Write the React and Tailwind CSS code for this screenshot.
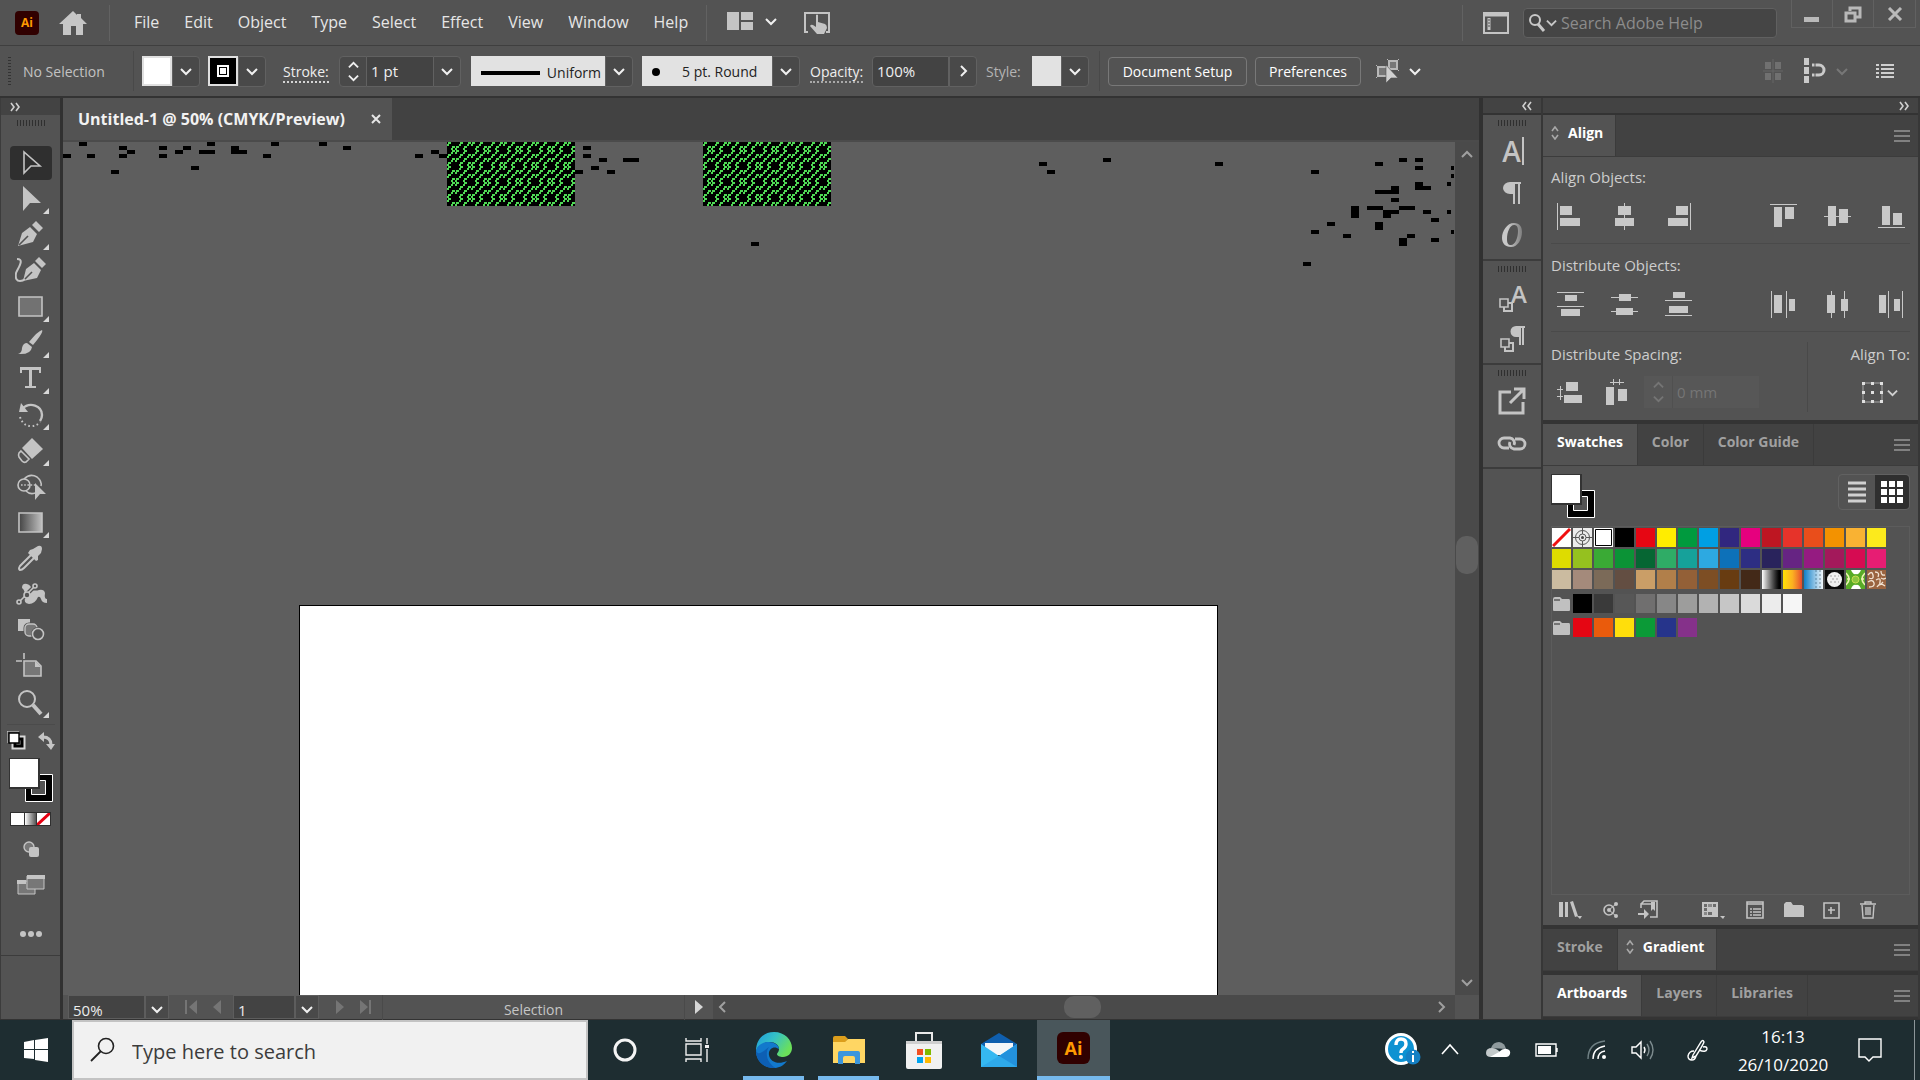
import { useState } from "react";
import { clsx } from "clsx";

// ── Icon base ─────────────────────────────────────────────────────────────────
const Svg = ({ w = 24, h = 24, className, children }) => (
  <svg width={w} height={h} viewBox={`0 0 ${w} ${h}`} className={clsx("shrink-0", className)} fill="none" aria-hidden="true">
    {children}
  </svg>
);

const Chevron = ({ dir = "down", size = 12, stroke = "#f0f0f0", width = 2 }) => {
  const d = {
    down: "M1 4l5 5 5-5",
    up: "M1 8l5-5 5 5",
    left: "M8 1L3 6l5 5",
    right: "M4 1l5 5-5 5",
  }[dir];
  return (
    <svg width={size} height={size} viewBox="0 0 12 12" fill="none" className="shrink-0" aria-hidden="true">
      <path d={d} stroke={stroke} strokeWidth={width} />
    </svg>
  );
};

const DoubleChevron = ({ dir }) => (
  <Svg w={12} h={10}>
    <path
      d={dir === "left" ? "M5 1L2 5l3 4M10 1L7 5l3 4" : "M2 1l3 4-3 4M7 1l3 4-3 4"}
      stroke="#d0d0d0"
      strokeWidth="1.6"
    />
  </Svg>
);

const Grip = () => (
  <Svg w={28} h={6}>
    {[0, 3, 6, 9, 12, 15, 18, 21, 24, 27].map((x) => (
      <rect key={x} x={x} width="1" height="6" fill="#2f2f2f" />
    ))}
  </Svg>
);

// ── Title bar ─────────────────────────────────────────────────────────────────
const MENUS = ["File", "Edit", "Object", "Type", "Select", "Effect", "View", "Window", "Help"];

const TitleBar = () => (
  <header className="flex h-[46px] shrink-0 items-center border-b border-[#3f3f3f] bg-[#535353]">
    <div className="ml-[15px] flex h-6 w-6 items-center justify-center rounded bg-[#300000] text-xs font-bold text-[#ff9a00]">
      Ai
    </div>
    <button aria-label="Home" className="ml-5">
      <Svg w={28} h={24}>
        <path d="M14 0L0 13h4v11h8v-9h5v9h7V13h4L22 7V3h-4v1z" fill="#c6c6c6" />
      </Svg>
    </button>
    <div className="ml-[22px] h-9 w-px bg-[#626262]" />
    <nav className="ml-6 flex gap-[25px] pb-[2px] text-base text-[#e6e6e6]">
      {MENUS.map((m) => (
        <button key={m}>{m}</button>
      ))}
    </nav>
    <div className="ml-[18px] h-9 w-px bg-[#626262]" />
    <button aria-label="Arrange documents" className="ml-5 flex items-center gap-3 pb-1">
      <Svg w={26} h={18}>
        <path d="M0 0h12v18H0zM14 0h12v8H14zM14 10h12v8H14z" fill="#c4c4c4" />
      </Svg>
      <Chevron />
    </button>
    <button aria-label="Touch workspace" className="ml-[26px]">
      <Svg w={28} h={24}>
        <path d="M5 21H2V2h24v19h-3" stroke="#c4c4c4" strokeWidth="2" />
        <path d="M13 4q1-1 2 0v7l7 2q2 1 2 4l-3 6h-7l-7-8q1-2 3-1l3 2z" fill="#c4c4c4" />
      </Svg>
    </button>
    <div className="ml-auto h-9 w-px bg-[#626262]" />
    <button aria-label="Switch workspace" className="ml-5">
      <Svg w={26} h={22}>
        <path d="M1 1h24v20H1z" stroke="#c4c4c4" strokeWidth="2" />
        <path d="M1 3h24M6 6v12" stroke="#c4c4c4" strokeWidth="3" />
        <path d="M5 8h2M5 11h2M5 14h2" stroke="#535353" />
      </Svg>
    </button>
    <label className="ml-[14px] flex h-[30px] w-[254px] items-center rounded border border-[#606060] bg-[#454545] pl-1">
      <Svg w={18} h={20}>
        <circle cx="7" cy="7" r="5" stroke="#c8c8c8" strokeWidth="2" />
        <path d="M10 11l6 7" stroke="#c8c8c8" strokeWidth="3" />
      </Svg>
      <Chevron stroke="#c8c8c8" size={11} />
      <input
        aria-label="Search Adobe Help"
        placeholder="Search Adobe Help"
        className="ml-1 w-0 flex-1 bg-transparent text-base outline-none placeholder:text-[#8c8c8c]"
      />
    </label>
    <div className="mr-1 ml-[14px] flex h-7 self-start border border-t-0 border-[#616161]">
      <button aria-label="Minimize" className="flex w-[41px] items-center justify-center border-r border-[#616161]">
        <Svg w={16} h={16}>
          <path d="M0 11h15v5H0z" fill="#b9b9b9" />
        </Svg>
      </button>
      <button aria-label="Restore" className="flex w-[41px] items-center justify-center border-r border-[#616161]">
        <Svg w={18} h={18}>
          <path d="M6 6V3h10v9h-4M2 8h9v8H2z" stroke="#b9b9b9" strokeWidth="3" />
        </Svg>
      </button>
      <button aria-label="Close" className="flex w-[41px] items-center justify-center">
        <Svg w={16} h={14}>
          <path d="M2 1l12 12M14 1L2 13" stroke="#b9b9b9" strokeWidth="3" />
        </Svg>
      </button>
    </div>
  </header>
);

// ── Control bar ───────────────────────────────────────────────────────────────
const DropButton = ({ label, dir }) => (
  <button
    aria-label={label}
    className="flex h-[31px] w-7 items-center justify-center rounded-r border border-[#616161] bg-[#494949]"
  >
    <Chevron dir={dir} />
  </button>
);

const ControlBar = () => (
  <section
    aria-label="Control"
    className="flex h-[52px] shrink-0 items-center border-b-2 border-[#333] bg-[#535353] text-sm whitespace-nowrap text-[#efefef]"
  >
    <Svg w={3} h={28} className="ml-2">
      {[0, 3, 6, 9, 12, 15, 18, 21, 24, 27].map((y) => (
        <rect key={y} y={y} width="3" height="1" fill="#333" />
      ))}
    </Svg>
    <span className="ml-3 w-[110px] pt-[2px] text-[#c2c2c2]">No Selection</span>
    <div className="h-10 w-px bg-[#494949]" />
    <button aria-label="Fill" className="ml-2 h-[30px] w-[30px] border-2 border-[#e0e0e0] bg-white" />
    <DropButton label="Fill swatches" />
    <button
      aria-label="Stroke"
      className="ml-2 flex h-[30px] w-[30px] items-center justify-center border-2 border-[#e0e0e0] bg-black"
    >
      <span className="block h-3 w-3 border-2 border-white bg-white outline-1 -outline-offset-3 outline-black" />
    </button>
    <DropButton label="Stroke swatches" />
    <label htmlFor="stroke-weight" className="ml-[17px] w-[56px] pt-[2px]">
      <span className="border-b-2 border-dotted border-[#d4d4d4]">Stroke:</span>
    </label>
    <div className="flex h-[31px] w-7 flex-col items-center justify-between rounded-l border border-[#616161] bg-[#494949] py-[3px]">
      <button aria-label="Increase">
        <Chevron dir="up" size={11} />
      </button>
      <button aria-label="Decrease">
        <Chevron size={11} />
      </button>
    </div>
    <input
      id="stroke-weight"
      defaultValue="1 pt"
      className="h-[31px] w-[66px] border-y border-[#616161] bg-[#434343] pl-1 text-[15px] outline-none"
    />
    <DropButton label="Stroke weights" />
    <button className="ml-[10px] flex h-[30px] w-[134px] items-center justify-between bg-[#e2e2e2] pt-1 pr-1 pl-[10px] text-[#222]">
      <span className="h-1 w-[59px] bg-black" />
      Uniform
    </button>
    <DropButton label="Width profiles" />
    <button className="ml-[9px] flex h-[30px] w-[130px] items-center gap-[22px] bg-[#e2e2e2] pt-[2px] pl-[10px] text-[#222]">
      <span className="h-2 w-2 rounded-full bg-black" />
      5 pt. Round
    </button>
    <DropButton label="Brushes" />
    <label htmlFor="opacity" className="ml-[10px] w-[62px] pt-[2px]">
      <span className="border-b-2 border-dotted border-[#a9a9a9]">Opacity:</span>
    </label>
    <input
      id="opacity"
      defaultValue="100%"
      className="h-[31px] w-[77px] rounded-l border border-[#616161] bg-[#434343] pl-1 text-[15px] outline-none"
    />
    <DropButton label="Opacity slider" dir="right" />
    <span className="ml-[9px] w-[46px] pt-[2px] text-[#b4b4b4]">Style:</span>
    <button aria-label="Graphic style" className="h-[30px] w-[29px] bg-[#e2e2e2]" />
    <DropButton label="Graphic styles" />
    <div className="ml-[10px] h-10 w-px bg-[#494949]" />
    <button className="ml-2 h-[29px] w-[139px] rounded border border-[#787878] pt-px text-white">Document Setup</button>
    <button className="ml-2 h-[29px] w-[106px] rounded border border-[#787878] pt-px text-white">Preferences</button>
    <button aria-label="Select similar" className="ml-[14px] flex items-center gap-2">
      <Svg w={26} h={26}>
        <path d="M3 9h9v9H3zM14 3h8v8h-8z" fill="#777" stroke="#b8b8b8" strokeWidth="2" />
        <path d="M1 7l3 3M1 20l3-3M12 1l3 3M24 1l-3 3M24 13l-3-3" stroke="#b8b8b8" />
        <path d="M11 7v18l5-5h7z" fill="#d0d0d0" stroke="#535353" strokeWidth="0.6" />
      </Svg>
      <Chevron />
    </button>
    <div className="mr-[26px] ml-auto flex items-center">
      <Svg w={20} h={24}>
        <path d="M2 3h6v7H2zM12 3h6v7h-6zM2 14h6v7H2zM12 14h6v7h-6z" fill="#707070" />
        <path d="M10 0v24M0 12h20" stroke="#666" />
      </Svg>
      <button aria-label="Snap options" className="ml-5 flex items-center gap-[10px]">
        <Svg w={23} h={26}>
          <path d="M1 0h5v7H1zM1 9h5v7H1zM1 18h5v7H1z" fill="#cacaca" />
          <path d="M9 7h7a4 4 0 010 10H9" stroke="#cacaca" strokeWidth="3" />
          <path d="M12 5v4M12 15v4" stroke="#535353" />
        </Svg>
        <Chevron stroke="#777" />
      </button>
      <button aria-label="Control menu" className="ml-7">
        <Svg w={18} h={16}>
          <path d="M0 2h3M0 6h3M0 10h3M0 14h3M5 2h13M5 6h13M5 10h13M5 14h13" stroke="#cfcfcf" strokeWidth="2" />
        </Svg>
      </button>
    </div>
  </section>
);

// ── Tools ─────────────────────────────────────────────────────────────────────
const C = "#c4c4c4";

const TOOLS = [
  { name: "Selection", art: <path d="M6 2v21l7-7h9z" stroke={C} strokeWidth="1.6" /> },
  { name: "Direct Selection", more: true, art: <path d="M5 0v25l7-8h11z" fill={C} /> },
  {
    name: "Pen",
    more: true,
    art: (
      <>
        <path d="M0 24l4-13 8-6 7 7-4 8zM14 3l4-4 7 7-4 4z" fill={C} />
        <path d="M1 23l9-9" stroke="#535353" strokeWidth="1.6" />
      </>
    ),
  },
  {
    name: "Curvature",
    art: (
      <>
        <path d="M5 23l3-12 8-6 7 7-4 8zM17 3l4-4 7 7-4 4z" fill={C} />
        <path d="M6 22l8-8" stroke="#535353" strokeWidth="1.6" />
        <path d="M-1 1c8 0 1 9-1 14-1 6 1 8 4 8q3 0 5-2" stroke={C} strokeWidth="2" />
      </>
    ),
  },
  { name: "Rectangle", more: true, art: <path d="M1 3h23v19H1z" fill="#727272" stroke={C} strokeWidth="1.6" /> },
  {
    name: "Paintbrush",
    more: true,
    art: <path d="M24 0Q26 2 15 15l-4-3Q20 1 24 0zM9 13l5 4q-1 8-14 7 4-1 4-6 1-5 5-5z" fill={C} />,
  },
  { name: "Type", more: true, art: <path d="M2 1h21v6h-2V4h-7v16h4v2H7v-2h4V4H4v3H2z" fill={C} /> },
  {
    name: "Rotate",
    more: true,
    art: (
      <>
        <path d="M4 7C12-1 24 4 24 13q0 3-2 6" stroke={C} strokeWidth="2.4" />
        <path d="M3 1l-2 9h9z" fill={C} />
        <path d="M2 15q3 9 11 9 6 0 9-4" stroke={C} strokeWidth="2" strokeDasharray="1.6 2.6" />
      </>
    ),
  },
  {
    name: "Eraser",
    more: true,
    art: (
      <>
        <path d="M14 0l11 11-11 10L4 10z" fill={C} />
        <path d="M3 13l8 8-3 3q-2 1-4-1l-3-4q-1-2 0-4z" stroke={C} strokeWidth="1.6" />
      </>
    ),
  },
  {
    name: "Shape Builder",
    art: (
      <>
        <circle cx="6" cy="11" r="6" stroke={C} strokeWidth="1.6" />
        <path d="M6 5q6-6 13-2 5 4 4 9M8 17q4 4 9 2" stroke={C} strokeWidth="1.6" />
        <path d="M3 11h14" stroke={C} strokeWidth="1.6" strokeDasharray="1.6 1.6" />
        <path d="M17 9v17l5-6h6z" fill={C} />
      </>
    ),
  },
  {
    name: "Gradient",
    more: true,
    art: <path d="M1 3h23v19H1z" fill="url(#toolGradient)" stroke={C} strokeWidth="1.6" />,
  },
  {
    name: "Eyedropper",
    art: (
      <>
        <path d="M14 8L2 20q-2 3 0 4 2 0 4-2l12-12" stroke={C} strokeWidth="2" />
        <path d="M12 4l3-1 5-3q4-1 4 3l-1 4-3 3v4l-2 1-8-8z" fill={C} />
      </>
    ),
  },
  {
    name: "Puppet Warp",
    art: (
      <>
        <path d="M4 6q0-5 5-4 4 1 5 6 4 1 7 0 5-1 6 3-1 6 2 6v4q-5 0-6-4-1-3-3-2-3 7-9 7-6-1-4-8 0-6-3-8z" fill={C} />
        <path d="M1 20L16 5" stroke="#535353" strokeWidth="4" />
        <path d="M1 20L16 5" stroke={C} strokeWidth="1.6" />
        <circle cx="9" cy="13" r="3" fill="#535353" stroke={C} strokeWidth="1.6" />
        <circle cx="17" cy="4" r="2" fill="#535353" stroke={C} strokeWidth="1.6" />
        <circle cx="1" cy="20" r="2" fill="#535353" stroke={C} strokeWidth="1.6" />
      </>
    ),
  },
  {
    name: "Blend",
    art: (
      <>
        <path d="M0 1h12v12H0z" fill={C} />
        <rect x="7" y="6" width="12" height="12" rx="4" fill="#777" stroke="#535353" strokeWidth="3" />
        <rect x="7" y="6" width="12" height="12" rx="4" fill="#777" stroke={C} strokeWidth="1.4" />
        <circle cx="20" cy="16" r="7" fill="#535353" />
        <circle cx="20" cy="16" r="5.5" stroke={C} strokeWidth="1.6" />
      </>
    ),
  },
  {
    name: "Artboard",
    art: (
      <>
        <path d="M6 7h12l5 5v10H6z" fill="#777" stroke={C} strokeWidth="1.6" />
        <path d="M17 7v6h6z" fill={C} />
        <path d="M6-1v6M-2 7h6" stroke={C} strokeWidth="1.6" />
      </>
    ),
  },
  {
    name: "Zoom",
    more: true,
    art: (
      <>
        <circle cx="9" cy="9" r="8" stroke={C} strokeWidth="2" />
        <path d="M15 15l8 9" stroke={C} strokeWidth="4" />
      </>
    ),
  },
];

const FillStroke = ({ className }) => (
  <Svg w={44} h={44} className={className}>
    <path d="M16.5 16.5h27v27h-27z" fill="#000" stroke="#fff" />
    <path d="M22.5 22.5h14v14h-14z" fill="#535353" stroke="#fff" />
    <path d="M0 0h30v30H0z" fill="#fff" stroke="#333" strokeWidth="2" />
  </Svg>
);

const Toolbar = () => {
  const [active, setActive] = useState("Selection");

  return (
    <aside className="flex w-[63px] shrink-0 flex-col border-r-3 border-l border-r-[#313131] border-l-[#3c3c3c] bg-[#535353]">
      <div className="flex h-[17px] items-center bg-[#434343] pl-2">
        <DoubleChevron dir="right" />
      </div>
      <div className="flex flex-col items-center border-b border-[#3c3c3c] pt-[5px] pb-[18px]">
        <Grip />
        <svg width="0" height="0" className="h-0" aria-hidden="true">
          <defs>
            <linearGradient id="toolGradient">
              <stop offset="0" stopColor="#444" />
              <stop offset="1" stopColor="#c0c0c0" />
            </linearGradient>
          </defs>
        </svg>
        <div className="mt-5 flex flex-col gap-[2px]">
          {TOOLS.map((tool) => (
            <button
              key={tool.name}
              aria-label={tool.name}
              onClick={() => setActive(tool.name)}
              className={clsx(
                "flex h-[34px] w-[42px] items-center justify-center rounded",
                active === tool.name && "bg-[#2f2f2f]"
              )}
            >
              <Svg w={34} h={30} className="ml-[2px]">
                <g transform="translate(3 2)">{tool.art}</g>
                {tool.more && <path d="M34 24v6h-6z" fill="#d8d8d8" />}
              </Svg>
            </button>
          ))}
        </div>
        <div className="mt-1 h-px w-12 bg-[#4b4b4b]" />
        <div className="mt-[6px] flex w-12 items-center justify-between">
          <button aria-label="Default fill and stroke">
            <Svg w={19} h={19}>
              <path d="M7 7h9v9H7z" stroke="#d8d8d8" strokeWidth="5" />
              <path d="M8 8h7v7H8z" stroke="#000" strokeWidth="3" />
              <path d="M2 2h10v10H2z" fill="#fff" stroke="#000" strokeWidth="1.4" />
              <path d="M0 12V0h12" stroke="#d8d8d8" />
            </Svg>
          </button>
          <button aria-label="Swap fill and stroke">
            <Svg w={17} h={18}>
              <path d="M5 5q8 0 8 8" stroke={C} strokeWidth="3" />
              <path d="M0 5l6-5v10zM8 12h9l-4 6z" fill={C} />
            </Svg>
          </button>
        </div>
        <FillStroke className="mt-2" />
        <div className="mt-[10px] flex border border-[#2f2f2f]">
          <button aria-label="Color" className="h-3 w-[13px] bg-white" />
          <button aria-label="Gradient" className="h-3 w-[13px] border-x border-[#333] bg-linear-to-r from-white to-[#555]" />
          <button aria-label="None" className="bg-white">
            <Svg w={13} h={12}>
              <path d="M0 12L13 0" stroke="#e60012" strokeWidth="3" />
            </Svg>
          </button>
        </div>
        <button aria-label="Draw mode" className="mt-[15px]">
          <Svg w={18} h={16}>
            <circle cx="7" cy="6" r="5" fill="#777" stroke={C} strokeWidth="1.4" />
            <rect x="7" y="6" width="10" height="10" rx="2" fill={C} />
          </Svg>
        </button>
        <button aria-label="Screen mode" className="mt-[18px]">
          <Svg w={28} h={20}>
            <path d="M1 6h17v13H1z" fill="#777" stroke={C} />
            <path d="M0 5h9v4H0z" fill={C} />
            <path d="M10 1h17v13H10z" fill="#777" stroke={C} />
            <path d="M10 0h18v4H10z" fill={C} />
          </Svg>
        </button>
        <button aria-label="Edit toolbar" className="mt-9">
          <Svg w={22} h={6}>
            <circle cx="3" cy="3" r="3" fill={C} />
            <circle cx="11" cy="3" r="3" fill={C} />
            <circle cx="19" cy="3" r="3" fill={C} />
          </Svg>
        </button>
      </div>
    </aside>
  );
};

// ── Document ──────────────────────────────────────────────────────────────────
// [x, y, width, height] of each stray block, from the canvas' top left corner
const BLOCKS = [
  [16, 0], [56, 4], [64, 8], [56, 12], [0, 12], [24, 12], [48, 28], [96, 4], [96, 12], [120, 4], [112, 8],
  [144, 0], [136, 8, 16], [168, 4], [168, 8, 16], [128, 24], [200, 12], [208, 0], [256, 0], [280, 4],
  [352, 12], [368, 8], [376, 12], [520, 4], [520, 12], [536, 16], [528, 24], [512, 28], [544, 28],
  [560, 16, 16], [688, 100], [976, 20], [984, 28], [1040, 16], [1152, 20],
  [1248, 28], [1312, 20], [1336, 16], [1352, 16], [1352, 24], [1388, 24, 3], [1388, 32, 3], [1384, 40, 4],
  [1352, 40, 8, 8], [1360, 44], [1328, 44, 8, 8], [1312, 48, 16], [1328, 56], [1288, 64, 8, 12],
  [1304, 64, 16], [1336, 64, 16], [1320, 68, 8, 8], [1328, 68], [1360, 68], [1384, 68, 4], [1368, 76],
  [1264, 80], [1248, 88], [1312, 80, 8, 8], [1280, 92], [1344, 92], [1336, 96, 8, 8], [1368, 96],
  [1388, 88, 3], [1240, 120],
];

// horizontal shift of the wave in each 4px row of the 32px tile
const WAVE_ROWS = [16, 0, 0, 16, 0, 16, 16, 0];
// x, y, width of the dots that make one wave and two ticks
const WAVE_DOTS = [[4, 2, 2], [5, 0, 3], [8, 2, 2], [9, 0, 3], [16, 2, 2], [17, 0, 3], [28, 2, 2], [29, 0, 3]];

const Canvas = () => (
  <div className="relative min-h-0 flex-1 overflow-hidden bg-[#5e5e5e]">
    <svg className="absolute inset-0 h-full w-full" shapeRendering="crispEdges" aria-hidden="true">
      <defs>
        <pattern id="waves" width="32" height="32" patternUnits="userSpaceOnUse">
          <rect width="32" height="32" fill="#000" />
          {WAVE_ROWS.map((shift, row) =>
            WAVE_DOTS.map(([x, y, w]) => (
              <rect key={`${row}-${x}`} x={(x + shift) % 32} y={row * 4 + y} width={w} height="2" fill="#4fd955" />
            ))
          )}
        </pattern>
      </defs>
      {BLOCKS.map(([x, y, w = 8, h = 4]) => (
        <rect key={`${x}-${y}`} x={x} y={y} width={w} height={h} fill="#000" />
      ))}
      <rect x="384" width="128" height="64" fill="url(#waves)" />
      <rect x="640" width="128" height="64" fill="url(#waves)" />
    </svg>
    <div className="absolute top-[463px] -bottom-px left-[236px] w-[919px] border border-black bg-white" />
  </div>
);

const StatusBar = () => (
  <div className="flex h-6 shrink-0 bg-[#4a4a4a] text-sm leading-6 text-[#ececec]">
    <div className="flex w-[650px] shrink-0 items-center bg-[#535353] pl-[5px]">
      <input aria-label="Zoom level" defaultValue="50%" className="h-full w-[77px] border border-[#5d5d5d] bg-[#434343] pt-[6px] pl-1 text-[15px] outline-none" />
      <button aria-label="Zoom presets" className="flex h-full w-6 items-center justify-center border border-[#5d5d5d] bg-[#494949] pt-1">
        <Chevron />
      </button>
      <Svg w={42} h={16} className="ml-4">
        <path d="M1 1v14" stroke="#757575" strokeWidth="2" />
        <path d="M12 1v14L4 8zM36 1v14l-8-7z" fill="#757575" />
      </Svg>
      <input aria-label="Artboard number" defaultValue="1" className="ml-[6px] h-full w-[62px] border border-[#5d5d5d] bg-[#434343] pt-[6px] pl-1 text-[15px] outline-none" />
      <button aria-label="Artboard list" className="flex h-full w-6 items-center justify-center border border-[#5d5d5d] bg-[#494949] pt-1">
        <Chevron />
      </button>
      <Svg w={38} h={16} className="ml-[17px]">
        <path d="M0 1v14l8-7zM24 1v14l8-7z" fill="#757575" />
        <path d="M34 1v14" stroke="#757575" strokeWidth="2" />
      </Svg>
      <span className="ml-2 flex-1 border-x border-[#4a4a4a] pt-[6px] text-center text-[#c6c6c6]">Selection</span>
      <button aria-label="Status menu" className="flex w-7 justify-center">
        <Svg w={8} h={16}>
          <path d="M0 1v14l8-7z" fill="#d6d6d6" />
        </Svg>
      </button>
    </div>
    <div className="flex flex-1 items-center pr-2 pl-1">
      <Chevron dir="left" stroke="#a0a0a0" />
      <div className="flex flex-1 justify-center">
        <div className="h-[22px] w-[37px] rounded-[10px] bg-[#606060]" />
      </div>
      <Chevron dir="right" stroke="#a0a0a0" />
    </div>
    <div className="w-6 bg-[#535353]" />
  </div>
);

const DocumentArea = () => (
  <main className="flex min-w-0 flex-1 flex-col border-r-4 border-[#313131]">
    <div className="flex h-11 shrink-0 border-b-2 border-[#4b4b4b] bg-[#424242]">
      <div className="flex w-[329px] items-center justify-between bg-[#535353] pr-[10px] pl-[15px] text-base font-bold text-[#f2f2f2]">
        Untitled-1 @ 50% (CMYK/Preview)
        <button aria-label="Close document">
          <Svg w={12} h={12}>
            <path d="M2 2l8 8M10 2l-8 8" stroke="#e6e6e6" strokeWidth="2" />
          </Svg>
        </button>
      </div>
    </div>
    <div className="flex min-h-0 flex-1">
      <Canvas />
      <div className="flex w-6 flex-col items-center justify-between bg-[#4a4a4a] py-[7px]">
        <Chevron dir="up" stroke="#a0a0a0" />
        <div className="mb-7 h-[38px] w-[22px] rounded-[10px] bg-[#606060]" />
        <Chevron stroke="#a0a0a0" />
      </div>
    </div>
    <StatusBar />
  </main>
);

// ── Collapsed panel dock ──────────────────────────────────────────────────────
const DOCK_GROUPS = [
  [
    {
      name: "Character",
      icon: (
        <span className="flex items-center gap-px pl-[2px] text-[28px] leading-7 font-semibold">
          A<span className="h-7 w-[2px] bg-[#c4c4c4]" />
        </span>
      ),
    },
    {
      name: "Paragraph",
      icon: (
        <Svg w={20} h={24}>
          <path d="M19 1H8a7 6 0 000 12h3v10h2V3h3v20h2V3h1z" fill={C} />
        </Svg>
      ),
    },
    {
      name: "OpenType",
      icon: (
        <Svg w={22} h={26}>
          <defs>
            <linearGradient id="openTypeRing">
              <stop offset="0.3" stopColor="#c8c8c8" />
              <stop offset="1" stopColor="#808080" />
            </linearGradient>
          </defs>
          <path
            d="M13 1c6 0 8 4 8 9 0 7-4 15-11 15-6 0-9-4-9-9C1 9 6 1 13 1zm0 2c-4 0-7 7-7 14 0 4 1 6 4 6 4 0 7-7 7-14 0-4-1-6-4-6z"
            fill="url(#openTypeRing)"
            fillRule="evenodd"
          />
        </Svg>
      ),
    },
  ],
  [
    {
      name: "Character Styles",
      icon: (
        <span className="flex items-end pl-[2px] text-2xl leading-6 font-semibold">
          <StyleSquares />
          <span className="-ml-[2px] pb-[6px]">A</span>
        </span>
      ),
    },
    {
      name: "Paragraph Styles",
      icon: (
        <span className="flex items-end">
          <StyleSquares />
          <Svg w={15} h={20} className="mb-[6px] -ml-[4px]">
            <path d="M15 0H6a5 5 0 000 11h3v8h2V2h1v17h2V2h1z" fill={C} />
          </Svg>
        </span>
      ),
    },
  ],
  [
    {
      name: "Asset Export",
      icon: (
        <Svg w={28} h={28}>
          <path d="M13 5H2v21h23V15" stroke={C} strokeWidth="3" />
          <path d="M12 16L25 3M16 2h10v10" stroke={C} strokeWidth="3" />
        </Svg>
      ),
    },
    {
      name: "Links",
      icon: (
        <Svg w={30} h={15}>
          <path d="M12 12H7a5 5 0 010-10h6a5 5 0 014 7" stroke={C} strokeWidth="2.8" />
          <path d="M18 3h5a5 5 0 010 10h-6a5 5 0 01-4-7" stroke={C} strokeWidth="2.8" />
        </Svg>
      ),
    },
  ],
];

function StyleSquares() {
  return (
    <Svg w={14} h={14}>
      <path d="M5 8v5h8V5H9" stroke={C} strokeWidth="2" />
      <path d="M1 1h8v8H1z" fill="#535353" stroke={C} strokeWidth="1.6" />
    </Svg>
  );
}

const Dock = () => (
  <aside className="flex w-[60px] shrink-0 flex-col border-r-2 border-[#373737] bg-[#535353] text-[#c4c4c4]">
    <div className="flex h-[17px] items-center justify-end border-b-2 border-[#333] bg-[#434343] pr-2">
      <DoubleChevron dir="left" />
    </div>
    {DOCK_GROUPS.map((group) => (
      <div key={group[0].name} className="flex flex-col items-center border-b-2 border-[#3c3c3c] pt-[5px]">
        <Grip />
        <div className="mt-1 flex flex-col items-center pb-[3px]">
          {group.map((item) => (
            <button key={item.name} aria-label={item.name} className="flex h-[42px] items-center justify-center">
              {item.icon}
            </button>
          ))}
        </div>
      </div>
    ))}
  </aside>
);

// ── Panels ────────────────────────────────────────────────────────────────────
const TabBar = ({ tabs, active, expandable }) => (
  <div className="flex h-[42px] shrink-0 border-b border-[#3c3c3c] bg-[#424242] text-sm font-bold">
    {tabs.map((tab) => (
      <button
        key={tab}
        className={clsx(
          "flex items-center border-r border-[#3b3b3b] pb-[6px]",
          expandable && tab === active ? "gap-[9px] pr-3 pl-2" : "px-[14px]",
          tab === active ? "bg-[#535353] text-white" : "text-[#a0a0a0]"
        )}
      >
        {expandable && tab === active && (
          <Svg w={8} h={14}>
            <path d="M1 5l3-4 3 4M1 9l3 4 3-4" stroke="#a8a8a8" strokeWidth="1.6" />
          </Svg>
        )}
        {tab}
      </button>
    ))}
    <button aria-label="Panel menu" className="mr-2 ml-auto">
      <Svg w={16} h={12}>
        <path d="M0 1h16M0 6h16M0 11h16" stroke="#c0c0c0" strokeWidth="1.2" />
      </Svg>
    </button>
  </div>
);

const ALIGN_ICONS = [
  { name: "Align left", art: "M0 0h1v27H0zM3 3h12v9H3zM3 15h20v8H3z" },
  { name: "Align horizontal center", art: "M13 0h1v27h-1zM7 3h13v9H7zM4 15h19v8H4z" },
  { name: "Align right", art: "M25 0h1v27h-1zM11 3h12v9H11zM3 15h20v8H3z" },
  { name: "Align top", art: "M0 1h27v1H0zM4 4h8v20H4zM15 4h9v12h-9z" },
  { name: "Align vertical center", art: "M0 13h27v1H0zM4 3h8v20H4zM15 6h9v14h-9z" },
  { name: "Align bottom", art: "M0 24h27v1H0zM4 3h8v19H4zM15 10h9v12h-9z" },
];

const DISTRIBUTE_ICONS = [
  { name: "Distribute top", art: "M0 1h27v1H0zM0 15h27v1H0zM8 4h12v6H8zM4 18h19v7H4z" },
  { name: "Distribute vertical center", art: "M0 6h27v1H0zM0 20h27v1H0zM8 3h12v7H8zM5 17h17v7H5z" },
  { name: "Distribute bottom", art: "M0 9h27v1H0zM0 24h27v1H0zM8 1h12v6H8zM4 15h19v7H4z" },
  { name: "Distribute left", art: "M1 0h1v27H1zM16 0h1v27h-1zM4 4h8v18H4zM19 8h6v12h-6z" },
  { name: "Distribute horizontal center", art: "M7 0h1v27H7zM20 0h1v27h-1zM3 4h8v18H3zM17 8h7v12h-7z" },
  { name: "Distribute right", art: "M10 0h1v27h-1zM24 0h1v27h-1zM1 4h7v18H1zM16 8h6v12h-6z" },
];

const IconRow = ({ icons }) => (
  <div className="flex items-center justify-between pr-[5px] pl-[6px]">
    {[icons.slice(0, 3), icons.slice(3)].map((half) => (
      <div key={half[0].name} className="flex gap-[27px]">
        {half.map((icon) => (
          <button key={icon.name} aria-label={icon.name}>
            <Svg w={27} h={27}>
              <path d={icon.art} fill="#c8c8c8" />
            </Svg>
          </button>
        ))}
      </div>
    ))}
  </div>
);

const AlignPanel = () => (
  <section aria-label="Align" className="border-b-4 border-[#343434]">
    <TabBar tabs={["Align"]} active="Align" expandable />
    <div className="px-2 pt-2 text-[15px] leading-6 text-[#cdcdcd]">
      <p>Align Objects:</p>
      <div className="flex h-[55px] flex-col justify-center border-b border-[#4a4a4a]">
        <IconRow icons={ALIGN_ICONS} />
      </div>
      <p className="mt-[9px]">Distribute Objects:</p>
      <div className="flex h-[55px] flex-col justify-center border-b border-[#4a4a4a]">
        <IconRow icons={DISTRIBUTE_ICONS} />
      </div>
      <div className="flex">
        <div className="mt-[10px] mb-2 flex-1 border-r border-[#494949]">
          <p>Distribute Spacing:</p>
          <div className="mt-[6px] flex h-10 items-center pl-[6px]">
            <button aria-label="Vertical distribute space">
              <Svg w={27} h={27}>
                <path d="M9 3h12v9H9zM7 16h18v8H7zM3 7h1v14H3zM0 10h6v1H0zM0 17h6v1H0z" fill="#c8c8c8" />
              </Svg>
            </button>
            <button aria-label="Horizontal distribute space" className="ml-[22px]">
              <Svg w={22} h={27}>
                <path d="M0 8h8v18H0zM12 10h9v12h-9zM4 3h14v1H4zM7 0h1v6H7zM13 0h1v6h-1z" fill="#c8c8c8" />
              </Svg>
            </button>
            <div className="ml-4 flex h-8 w-7 flex-col items-center justify-between bg-[#575757] py-1">
              <Chevron dir="up" stroke="#757575" size={11} />
              <Chevron stroke="#757575" size={11} />
            </div>
            <input
              aria-label="Spacing"
              disabled
              defaultValue="0 mm"
              className="h-8 w-[87px] border-l border-[#505050] bg-[#575757] pl-1 text-[15px] text-[#757575]"
            />
          </div>
        </div>
        <div className="mt-[10px] mb-2 w-[102px] text-right">
          <p>Align To:</p>
          <button aria-label="Align to" className="mt-[6px] mr-3 flex h-10 w-[90px] items-center justify-end gap-1">
            <Svg w={21} h={21}>
              <path d="M1 1h19v19H1z" stroke="#a8a8a8" />
              <path
                d="M0 0h3v3H0zM9 0h3v3H9zM18 0h3v3h-3zM0 9h3v3H0zM9 9h3v3H9zM18 9h3v3h-3zM0 18h3v3H0zM9 18h3v3H9zM18 18h3v3h-3z"
                fill="#e0e0e0"
              />
            </Svg>
            <Chevron stroke="#d0d0d0" size={11} />
          </button>
        </div>
      </div>
    </div>
  </section>
);

const SWATCH_ROWS = [
  ["none", "registration", "white", "#000000", "#e60613", "#ffed00", "#009a3e", "#009fe3", "#31277f", "#e6007e", "#be1622", "#e6332a", "#e94e1b", "#f39200", "#f9b233", "#fcea1c"],
  ["#dedc00", "#95c11f", "#3aaa35", "#0b9336", "#066633", "#2fac66", "#16a19a", "#2da9e1", "#0d71b9", "#2d2e83", "#29235c", "#662483", "#951b81", "#a3195b", "#d60b52", "#e71d73"],
  ["#cbbba0", "#a48a7b", "#7b6a58", "#634e42", "#ca9e67", "#b17f4a", "#936037", "#7d4e24", "#683c11", "#432918", "fade", "sunset", "sky", "pearl", "leaf", "curl"],
];
const GRAYS = ["#000000", "#3a3a3a", "#575757", "#706f6f", "#878787", "#9d9d9c", "#b2b2b2", "#c6c6c6", "#dadada", "#ececec", "#f6f6f6"];
const BRIGHTS = ["#e50613", "#ea5b0c", "#ffde0b", "#0b9a37", "#26348b", "#85318a"];

const SPECIAL = {
  none: (
    <>
      <rect width="19" height="19" fill="#fff" />
      <path d="M1 18L18 1" stroke="#f01010" strokeWidth="3" />
    </>
  ),
  registration: (
    <>
      <rect width="19" height="19" fill="#ececec" />
      <path d="M9.5 0v19M0 9.5h19" stroke="#555" />
      <circle cx="9.5" cy="9.5" r="7" stroke="#555" />
      <circle cx="9.5" cy="9.5" r="3.5" stroke="#555" fill="#ececec" />
      <circle cx="9.5" cy="9.5" r="1.5" fill="#444" />
    </>
  ),
  white: (
    <>
      <rect width="19" height="19" fill="#fff" />
      <path d="M1.5 1.5h16v16h-16z" stroke="#000" />
    </>
  ),
  sky: (
    <>
      <defs>
        <linearGradient id="skyFade">
          <stop offset="0" stopColor="#0f7fc8" />
          <stop offset="1" stopColor="#0f7fc8" stopOpacity="0.05" />
        </linearGradient>
      </defs>
      <rect width="19" height="19" fill="#fff" />
      <path d="M12 0v19M16 0v19" stroke="#c4c4c4" strokeWidth="2" strokeDasharray="2 2" />
      <rect width="19" height="19" fill="url(#skyFade)" />
    </>
  ),
  pearl: (
    <>
      <rect width="19" height="19" fill="#0b0b0b" />
      <circle cx="9.5" cy="9.5" r="7.5" fill="#f0f0f0" />
      <path d="M5 6h2M9 6h2M13 6h1M7 9h2M11 9h2M5 12h2M9 12h2M13 12h1" stroke="#c9c9c9" strokeWidth="2" />
    </>
  ),
  leaf: (
    <>
      <rect width="19" height="19" fill="#58ab27" />
      <path d="M5 0h10q-2 5-5 4-3 1-5-4zM5 19h10q-2-5-5-4-3-1-5 4z" fill="#fff" />
      <path d="M0 3q6 6 0 12M19 3q-6 6 0 12M1 9h3M15 9h3" stroke="#eaf3b0" strokeWidth="1.6" />
      <circle cx="9.5" cy="9.5" r="3.5" fill="#8cc63f" stroke="#c9dd55" />
    </>
  ),
  curl: (
    <>
      <rect width="19" height="19" fill="#9a6440" />
      <path
        d="M1 5q4-5 5 0t-4 3M8 2q5 0 3 5M14 1q0 5 4 4M1 12q5-3 6 1t-5 4M9 10q5-3 4 2t3 0M10 17q3-5 8-1M14 8q3 2 5 0"
        stroke="#f1e3d3"
        strokeWidth="1.3"
      />
    </>
  ),
};

const Swatch = ({ color }) => {
  if (SPECIAL[color]) {
    return (
      <button aria-label={color}>
        <Svg w={19} h={19}>{SPECIAL[color]}</Svg>
      </button>
    );
  }
  if (color === "fade") return <button aria-label={color} className="h-[19px] w-[19px] bg-linear-to-r from-white to-black" />;
  if (color === "sunset")
    return <button aria-label={color} className="h-[19px] w-[19px] bg-linear-to-r from-[#ffe100] via-[#fbb020] to-[#e4472b]" />;
  return <button aria-label={color} className="h-[19px] w-[19px]" style={{ backgroundColor: color }} />;
};

const Folder = () => (
  <Svg w={19} h={19}>
    <path d="M1 5q0-2 2-2h5l2 2h7q1 0 1 2v9q0 1-1 1H2q-1 0-1-1z" fill="#c0c0c0" />
    <path d="M2 6h6" stroke="#535353" strokeWidth="1.4" />
  </Svg>
);

const SwatchesPanel = () => {
  const [view, setView] = useState("grid");

  return (
    <section aria-label="Swatches" className="flex min-h-0 flex-1 flex-col border-b-4 border-[#343434]">
      <TabBar tabs={["Swatches", "Color", "Color Guide"]} active="Swatches" />
      <div className="flex min-h-0 flex-1 flex-col px-2 pt-2">
        <div className="flex items-start justify-between">
          <FillStroke />
          <div className="flex h-9 rounded border border-[#616161]">
            <button
              aria-label="List view"
              onClick={() => setView("list")}
              className={clsx("flex w-9 items-center justify-center", view === "list" && "bg-[#2f2f2f]")}
            >
              <Svg w={18} h={22}>
                <path d="M0 2h18M0 8h18M0 14h18M0 20h18" stroke="#d0d0d0" strokeWidth="3" />
              </Svg>
            </button>
            <button
              aria-label="Grid view"
              onClick={() => setView("grid")}
              className={clsx("flex w-[34px] items-center justify-center rounded-r", view === "grid" && "bg-[#2f2f2f]")}
            >
              <Svg w={22} h={22}>
                <path
                  d="M0 0h6v6H0zM8 0h6v6H8zM16 0h6v6h-6zM0 8h6v6H0zM8 8h6v6H8zM16 8h6v6h-6zM0 16h6v6H0zM8 16h6v6H8zM16 16h6v6h-6z"
                  fill="#fff"
                />
              </Svg>
            </button>
          </div>
        </div>
        <div className="mt-2 flex min-h-0 flex-1 flex-col gap-[5px] border border-[#5c5c5c] pt-px">
          <div className="flex flex-col gap-[2px]">
            {SWATCH_ROWS.map((row) => (
              <div key={row[0]} className="flex gap-[2px]">
                {row.map((color) => (
                  <Swatch key={color} color={color} />
                ))}
              </div>
            ))}
          </div>
          {[GRAYS, BRIGHTS].map((row) => (
            <div key={row[0]} className="flex gap-[2px]">
              <Folder />
              {row.map((color) => (
                <Swatch key={color} color={color} />
              ))}
            </div>
          ))}
        </div>
        <div className="flex h-[30px] shrink-0 items-center justify-between pr-[34px] pl-2">
          <button aria-label="Swatch libraries">
            <Svg w={24} h={18}>
              <path d="M0 1h4v15H0zM6 1h3v15H6zM11 1l3-1 5 15-3 1zM18 15h5l-2 3z" fill={C} />
            </Svg>
          </button>
          <button aria-label="Color themes">
            <Svg w={16} h={18}>
              <circle cx="6" cy="9" r="5" stroke={C} strokeWidth="1.6" />
              <circle cx="6" cy="9" r="2" fill={C} />
              <circle cx="13" cy="3" r="2" fill={C} />
              <circle cx="13" cy="15" r="2" fill={C} />
              <path d="M6 9l7-6M6 9l7 6" stroke={C} />
            </Svg>
          </button>
          <button aria-label="Add to library">
            <Svg w={20} h={20}>
              <path d="M3 8V4h12M3 4l3-3h13v16h-7" stroke={C} strokeWidth="1.6" />
              <path d="M13 2h4v9l-2-2-2 2zM0 13h6V9l5 5-5 5v-4H0z" fill={C} />
            </Svg>
          </button>
          <button aria-label="Swatch kinds" className="ml-6">
            <Svg w={24} h={18}>
              <path d="M0 1h16v15H0z" fill={C} />
              <path d="M2 3h3v3H2zM11 3h3v3h-3zM2 7h3v3H2zM6 11h4v3H6z" fill="#6b6b6b" />
              <path d="M6 3h4v3H6zM2 11h3v3H2z" fill="#888" />
              <path d="M18 15h5l-2 3z" fill={C} />
            </Svg>
          </button>
          <button aria-label="Swatch options">
            <Svg w={18} h={18}>
              <path d="M1 1h16v16H1z" stroke={C} strokeWidth="1.6" />
              <path d="M1 3h16M4 8h2M4 11h2M4 14h2M7 8h8M7 11h8M7 14h8" stroke={C} strokeWidth="1.4" />
            </Svg>
          </button>
          <button aria-label="New color group">
            <Svg w={20} h={16}>
              <path d="M0 2l2-2h5l2 3h9l2 1v11H0z" fill={C} />
            </Svg>
          </button>
          <button aria-label="New swatch">
            <Svg w={17} h={17}>
              <path d="M1 1h15v15H1zM5 8h7M8 5v7" stroke={C} strokeWidth="1.6" />
            </Svg>
          </button>
          <button aria-label="Delete swatch">
            <Svg w={16} h={18}>
              <path d="M0 3h16M5 3V1h6v2M2 4l1 13h10l1-13M6 6v8M8 6v8M10 6v8" stroke={C} strokeWidth="1.4" />
            </Svg>
          </button>
        </div>
      </div>
    </section>
  );
};

const Panels = () => (
  <aside className="flex w-[377px] shrink-0 flex-col border-r-2 border-[#373737] bg-[#535353]">
    <div className="flex h-[17px] shrink-0 items-center justify-end border-b-2 border-[#333] bg-[#434343] pr-2">
      <DoubleChevron dir="right" />
    </div>
    <AlignPanel />
    <SwatchesPanel />
    <section aria-label="Gradient" className="border-b-4 border-[#343434]">
      <TabBar tabs={["Stroke", "Gradient"]} active="Gradient" expandable />
    </section>
    <section aria-label="Artboards" className="border-b-2 border-[#343434]">
      <TabBar tabs={["Artboards", "Layers", "Libraries"]} active="Artboards" />
    </section>
  </aside>
);

// ── Taskbar ───────────────────────────────────────────────────────────────────
const APPS = [
  {
    name: "Edge",
    open: true,
    icon: (
      <Svg w={38} h={38}>
        <defs>
          <linearGradient id="edgeTop" x1="0" x2="1" y1="0" y2="0.5">
            <stop offset="0" stopColor="#1d9bde" />
            <stop offset="0.5" stopColor="#35c1c6" />
            <stop offset="1" stopColor="#6be05a" />
          </linearGradient>
        </defs>
        <path d="M1 20C1 8 9 1 19 1c11 0 18 8 18 16 0 5-4 9-9 9-3 0-6-1-6-3 0-1 2-2 2-5 0-4-4-7-9-7C9 11 3 15 1 20z" fill="url(#edgeTop)" />
        <path d="M1 20c1-6 7-9 13-9 5 0 10 3 10 7-5-4-11 0-10 6 1 7 9 10 18 6-4 5-8 7-13 7C8 37 1 29 1 20z" fill="#1279cc" />
        <path d="M14 16c-5 7-1 17 7 21C8 38 1 29 1 20c3 5 6 1 13-4z" fill="#0d5fb4" />
      </Svg>
    ),
  },
  {
    name: "File Explorer",
    open: true,
    icon: (
      <Svg w={34} h={30}>
        <path d="M1 3q0-2 2-2h10l3 3-3 4H1z" fill="#dc9e1c" />
        <path d="M1 7h12l3-3h17v24H1z" fill="#ffd663" />
        <path d="M6 29V18q0-2 2-2h18q2 0 2 2v11h-5v-6q0-2-2-2h-8q-2 0-2 2v6z" fill="#3c96dc" />
      </Svg>
    ),
  },
  {
    name: "Microsoft Store",
    icon: (
      <Svg w={36} h={38}>
        <path d="M10 12V2h16v10" stroke="#e9e9e9" strokeWidth="2" />
        <path d="M0 10h36v26q0 2-2 2H2q-2 0-2-2z" fill="#f1f1f1" />
        <path d="M0 10h36v3H0z" fill="#cfcfcf" />
        <path d="M11 18h6v6h-6z" fill="#f25022" />
        <path d="M19 18h6v6h-6z" fill="#7fba00" />
        <path d="M11 26h6v6h-6z" fill="#00a4ef" />
        <path d="M19 26h6v6h-6z" fill="#ffb900" />
      </Svg>
    ),
  },
  {
    name: "Mail",
    icon: (
      <Svg w={38} h={36}>
        <path d="M1 12L19 1l18 11v10H1z" fill="#0f5fae" />
        <path d="M5 11h28v12H5z" fill="#f4f6f8" />
        <path d="M1 12l18 12 18-12v23H1z" fill="#35b8f1" />
        <path d="M19 24l18 11H1z" fill="#2ea9ea" />
        <path d="M19 24l18-12v23z" fill="#2391dc" />
      </Svg>
    ),
  },
];

const Taskbar = () => (
  <footer className="flex h-[60px] shrink-0 items-stretch bg-[#1e2d31] text-white">
    <button aria-label="Start" className="flex w-[72px] items-center justify-center">
      <Svg w={24} h={24}>
        <path d="M0 4l10-2v9H0zM11 2l13-2v11H11zM0 12h10v9L0 20zM11 12h13v12l-13-2z" fill="#fff" />
      </Svg>
    </button>
    <label className="flex w-[516px] items-center border-2 border-[#c3c3c3] bg-[#f1f1f1] pl-4">
      <Svg w={26} h={26}>
        <circle cx="16" cy="9" r="7.5" stroke="#222" strokeWidth="1.6" />
        <path d="M11 14L1 24" stroke="#222" strokeWidth="1.8" />
      </Svg>
      <input
        aria-label="Type here to search"
        placeholder="Type here to search"
        className="ml-4 w-0 flex-1 bg-transparent pt-[3px] text-xl outline-none placeholder:text-[#3c3c3c]"
      />
    </label>
    <button aria-label="Cortana" className="flex w-[74px] items-center justify-center">
      <Svg w={24} h={24}>
        <circle cx="12" cy="12" r="10" stroke="#f4f4f4" strokeWidth="3" />
      </Svg>
    </button>
    <button aria-label="Task View" className="flex w-[74px] items-center justify-center pr-1">
      <Svg w={24} h={24}>
        <path d="M1 0v3h15V0M1 24v-3h15v3M1 6h15v11H1zM22 0v6M22 11v13" stroke="#f0f0f0" strokeWidth="1.4" />
        <path d="M20 7h4v3h-4z" fill="#f0f0f0" />
      </Svg>
    </button>
    {APPS.map((app) => (
      <button key={app.name} aria-label={app.name} className="flex w-[75px] flex-col items-center">
        <span className="flex flex-1 items-center">{app.icon}</span>
        <span className={clsx("-mt-1 h-1 w-[61px]", app.open && "bg-[#76b9ed]")} />
      </button>
    ))}
    <button aria-label="Illustrator" className="ml-px flex w-[73px] items-center justify-center border-b-4 border-[#76b9ed] bg-[#49565b]">
      <span className="flex h-8 w-[33px] items-center justify-center rounded-md bg-[#300000] text-lg font-bold text-[#ff9a00]">
        Ai
      </span>
    </button>
    <div className="ml-auto flex items-center">
      <button aria-label="Help tips">
        <Svg w={36} h={34}>
          <circle cx="16" cy="16" r="14.5" fill="#0d92d2" stroke="#fff" strokeWidth="3" />
          <path d="M11 12q0-6 5-6t5 5q0 3-3 5-2 1-2 4" stroke="#fff" strokeWidth="3.4" />
          <circle cx="16" cy="24" r="2" fill="#fff" />
          <circle cx="28" cy="24" r="7.5" fill="#1580c4" />
          <path d="M28 22v7M28 18v2" stroke="#fff" strokeWidth="2" />
        </Svg>
      </button>
      <button aria-label="Hidden icons" className="ml-5">
        <Svg w={18} h={16}>
          <path d="M1 12l8-9 8 9" stroke="#fff" strokeWidth="1.6" />
        </Svg>
      </button>
      <button aria-label="OneDrive" className="ml-[26px]">
        <Svg w={26} h={18}>
          <path d="M6 7Q8 1 14 1q6 1 7 7z" fill="#8e999c" />
          <path d="M6 16q-5 0-5-4 0-5 6-5 4 0 8 4l-7 5z" fill="#c4cacb" />
          <path d="M5 16l9-5q4-4 8-3 4 1 3 5-1 3-4 3z" fill="#fff" />
        </Svg>
      </button>
      <button aria-label="Battery" className="ml-6">
        <Svg w={24} h={14}>
          <path d="M1 1h20v12H1zM22 5v4" stroke="#fff" strokeWidth="1.4" />
          <path d="M3 3h13v8H3z" fill="#fff" />
        </Svg>
      </button>
      <button aria-label="Network" className="ml-7">
        <Svg w={20} h={20}>
          <path d="M1 19Q1 3 18 1" stroke="#708084" strokeWidth="1.4" />
          <path d="M6 19Q6 8 18 6M11 19q0-7 7-8" stroke="#fff" strokeWidth="1.4" />
          <circle cx="17" cy="17" r="2" fill="#fff" />
        </Svg>
      </button>
      <button aria-label="Volume" className="ml-6">
        <Svg w={24} h={20}>
          <path d="M1 7h4l5-5v16l-5-5H1z" stroke="#fff" strokeWidth="1.4" />
          <path d="M13 7q2 3 0 6" stroke="#fff" strokeWidth="1.4" />
          <path d="M16 4q4 6 0 12M19 1q6 9 0 18" stroke="#7d8b8e" strokeWidth="1.4" />
        </Svg>
      </button>
      <button aria-label="Pen workspace" className="ml-8">
        <Svg w={22} h={22}>
          <path d="M6 16L14 3q2-3 3 0-1 3-8 14l-4 2zM7 12q-5 0-6 5 0 4 4 4 3 0 4-4M12 11q7 3 8-1 0-3-4-2" stroke="#fff" strokeWidth="1.4" />
        </Svg>
      </button>
      <time className="ml-[22px] w-[104px] pt-px text-center text-[17px] leading-7">
        16:13
        <br />
        26/10/2020
      </time>
      <button aria-label="Notifications" className="ml-[23px]">
        <Svg w={24} h={24}>
          <path d="M1 1h22v18h-8l-4 4-4-4H1z" stroke="#fff" strokeWidth="1.4" />
        </Svg>
      </button>
      <div className="mr-[5px] ml-8 h-[60px] w-px bg-[#8b9599]" />
    </div>
  </footer>
);

// ── App ───────────────────────────────────────────────────────────────────────
const App = () => (
  <div className="flex h-screen flex-col overflow-hidden bg-[#535353] font-['Segoe_UI','Open_Sans','Noto_Sans',sans-serif]">
    <TitleBar />
    <ControlBar />
    <div className="flex min-h-0 flex-1 border-b border-[#333]">
      <Toolbar />
      <DocumentArea />
      <Dock />
      <Panels />
    </div>
    <Taskbar />
  </div>
);

export default App;
